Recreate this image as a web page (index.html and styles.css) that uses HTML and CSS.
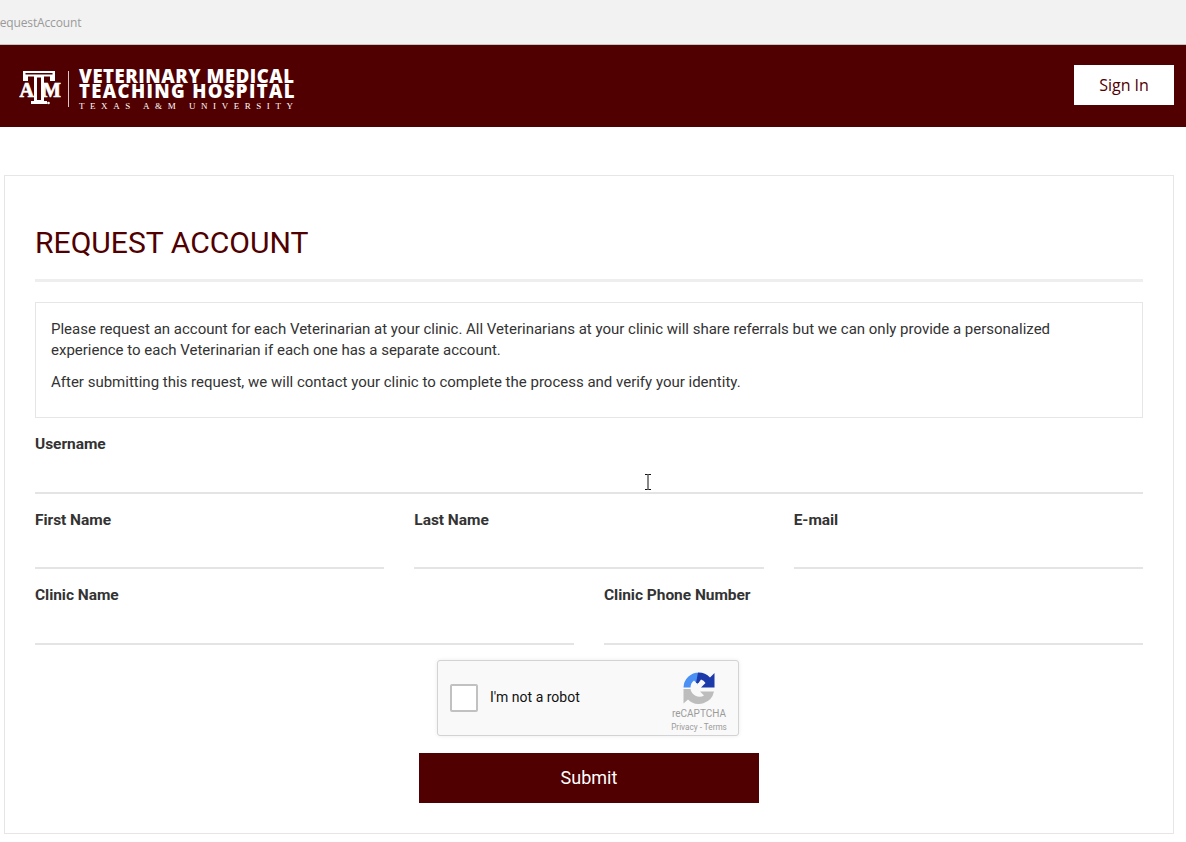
FILE: index.html
```html
<!DOCTYPE html>
<html lang="en">
<head>
<meta charset="utf-8">
<title>Request Account</title>
<link rel="stylesheet" href="styles.css">
</head>
<body>
<div class="urlbar"><span class="url">RequestAccount</span></div>
<header class="header">
  <a class="logo">
    <svg class="atm" width="42" height="36" viewBox="0 0 42 36">
      <path d="M4 0H36V10H31V5.500H25V30H28V33H12V30H15V5.500H9V10H4Z" fill="#fff"/>
      <path d="M6.500 2H33.500V3.500H6.500ZM18 6.500H22V29H18Z" fill="#500000"/>
      <text x="0.500" y="26" class="atm-letter">A</text>
      <text x="23" y="26" class="atm-letter">M</text>
      <circle cx="29.500" cy="32" r="1.300" fill="#fff"/>
    </svg>
    <span class="logo-rule"></span>
    <span class="logo-text">
      <span class="logo-line">VETERINARY MEDICAL</span>
      <span class="logo-line logo-line-2">TEACHING HOSPITAL</span>
      <span class="logo-sub">TEXAS A&amp;M UNIVERSITY</span>
    </span>
  </a>
  <a class="signin">Sign In</a>
</header>
<main class="card">
  <h1 class="title">REQUEST ACCOUNT</h1>
  <div class="intro">
    <p>Please request an account for each Veterinarian at your clinic. All Veterinarians at your clinic will share referrals but we can only provide a personalized experience to each Veterinarian if each one has a separate account.</p>
    <p>After submitting this request, we will contact your clinic to complete the process and verify your identity.</p>
  </div>
  <form class="form">
    <div class="row"><label class="field"><span class="label">Username</span><input class="input" type="text"></label></div>
    <div class="row row-3">
      <label class="field"><span class="label">First Name</span><input class="input" type="text"></label>
      <label class="field"><span class="label">Last Name</span><input class="input" type="text"></label>
      <label class="field"><span class="label">E-mail</span><input class="input" type="text"></label>
    </div>
    <div class="row row-2">
      <label class="field"><span class="label">Clinic Name</span><input class="input" type="text"></label>
      <label class="field"><span class="label">Clinic Phone Number</span><input class="input" type="text"></label>
    </div>
    <div class="recaptcha">
      <span class="rc-check"></span>
      <span class="rc-label">I'm not a robot</span>
      <span class="rc-brand">
        <svg class="rc-icon" width="32" height="32" viewBox="0 0 32 32">
          <path d="M16 .5A15.500 15.500 0 0 0 .5 15.500H7.500A9 9 0 0 1 11 8.500L15 12.500V.5Z" fill="#4a90f5"/>
          <path d="M15 .5A15.500 15.500 0 0 1 27 5.500L31.500 1V15.500H18L22.500 11A9 9 0 0 0 18 7.500L15.500 11H13Z" fill="#1c3aa9"/>
          <path d="M.5 17H7.500A9 9 0 0 0 21 23.500L17 19.500H31A15.500 15.500 0 0 1 5 27.500L.5 31.500Z" fill="#bdbdbd"/>
        </svg>
        <span class="rc-name">reCAPTCHA</span>
        <span class="rc-links">Privacy - Terms</span>
      </span>
    </div>
    <button class="submit" type="button">Submit</button>
  </form>
</main>
<svg class="ibeam" width="8" height="16" viewBox="0 0 8 16"><path d="M1 .5H3.500L4 1L4.500 .5H7M4 1V15M1 15.500H3.500L4 15L4.500 15.500H7" fill="none" stroke="#111" stroke-width="1"/></svg>
</body>
</html>
```
FILE: styles.css
```css
* { box-sizing: border-box; }
html, body { margin: 0; padding: 0; height: 842px; overflow: hidden; background: #fff; }
body { font-family: Roboto, "Liberation Sans", sans-serif; color: #333; position: relative; }

.urlbar { height: 45px; background: #f2f2f2; border-bottom: 1px solid #c4c4c4; overflow: hidden; display: flex; align-items: center; }
.url { font-family: "Open Sans", "Liberation Sans", sans-serif; font-size: 12px; letter-spacing: -.15px; color: #9a9a9a; margin-left: -7.500px; }

.header { height: 82px; background: #500000; display: flex; align-items: flex-start; justify-content: space-between; padding: 20px 12px 0 19px; }
.logo { display: flex; align-items: flex-start; margin-top: 2.500px; }
.atm { display: block; margin-top: 3.500px; }
.atm-letter { font-family: "Liberation Serif", serif; font-weight: 700; font-size: 20px; fill: #fff; stroke: #fff; stroke-width: .7px; }
.logo-rule { width: 1px; height: 36px; background: #d9c6c6; margin: 3.500px 10px 0 7px; }
.logo-text { display: flex; flex-direction: column; color: #fff; width: 217px; }
.logo-line { font-family: "Open Sans", sans-serif; font-weight: 800; font-size: 18.500px; line-height: 15px; white-space: nowrap; letter-spacing: .55px; }
.logo-line-2 { letter-spacing: 1.350px; }
.logo-sub { font-family: "Liberation Serif", serif; font-size: 9px; line-height: 11px; letter-spacing: 5.550px; white-space: nowrap; margin-top: 3px; }
.signin { width: 100px; height: 40px; background: #fff; color: #500000; font-family: "Open Sans", sans-serif; font-size: 16px; display: flex; align-items: center; justify-content: center; padding-bottom: 1px; }

.card { margin: 48px 12px 0 4px; height: 659px; border: 1px solid #e6e6e6; padding: 47px 30px 0; }
.title { margin: 0; font-size: 30.100px; font-weight: 400; line-height: 40px; color: #500000; padding-bottom: 16px; border-bottom: 3px solid #eee; }
.intro { margin-top: 20px; height: 116px; border: 1px solid #e6e6e6; padding: 16px 30px 0 15px; font-size: 15px; line-height: 21px; }
.intro p { margin: 0 0 11px; }

.form { display: flex; flex-direction: column; margin-top: 15px; }
.row { display: grid; grid-template-columns: 1fr; column-gap: 30px; height: 75.500px; }
.row-3 { grid-template-columns: repeat(3, 1fr); }
.row-2 { grid-template-columns: repeat(2, 1fr); }
.field { display: flex; flex-direction: column; height: 61px; }
.row-3 .field { height: 60px; }
.label { font-size: 15.500px; font-weight: 700; line-height: 22px; color: #333; letter-spacing: -.04px; }
.input { flex: 1; min-width: 0; width: 100%; border: 0; border-bottom: 2px solid #e4e4e4; background: transparent; outline: 0; padding: 0; }

.recaptcha { align-self: center; width: 302px; height: 76px; margin-left: -2px; background: #f9f9f9; border: 1px solid #d3d3d3; border-radius: 3px; box-shadow: 0 0 4px rgba(0,0,0,.08); display: flex; align-items: center; padding: 0 9px 0 12px; }
.rc-check { width: 28px; height: 28px; background: #fff; border: 2px solid #c1c1c1; border-radius: 2px; margin-right: 12px; }
.rc-label { font-size: 14px; color: #111; flex: 1; margin-bottom: 2px; }
.rc-brand { display: flex; flex-direction: column; align-items: center; width: 60px; align-self: flex-start; padding-top: 11px; }
.rc-icon { display: block; }
.rc-name { font-size: 10px; line-height: 12px; color: #9b9b9b; margin-top: 4px; }
.rc-links { font-size: 8.200px; line-height: 14px; color: #9b9b9b; white-space: nowrap; }

.submit { align-self: center; width: 340px; height: 50px; margin-top: 17px; background: #500000; color: #fff; border: 0; font-family: Roboto, sans-serif; font-size: 18px; padding: 0; }

.ibeam { position: absolute; left: 644px; top: 474px; }
```
